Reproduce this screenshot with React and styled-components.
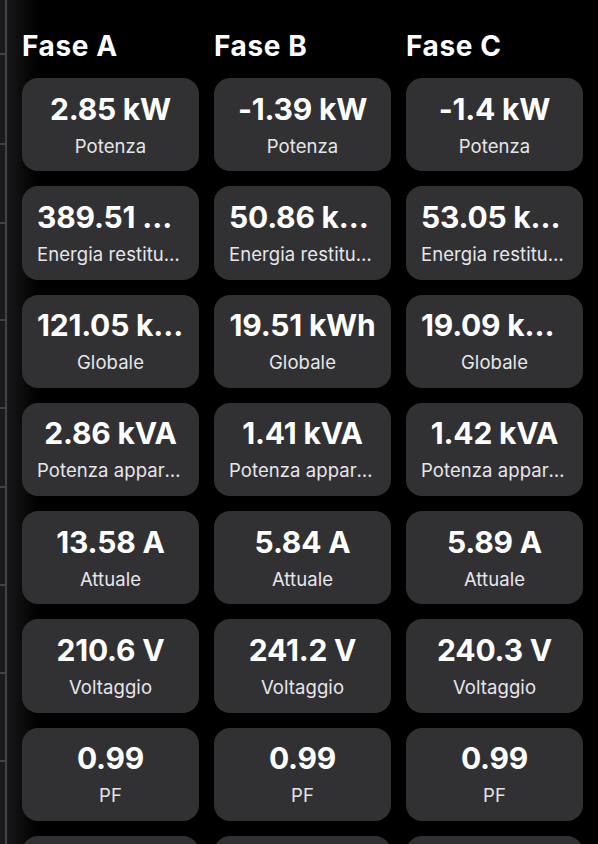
import React from "react";
import styled, { createGlobalStyle } from "styled-components";

const GlobalStyle = createGlobalStyle`
  html, body {
    margin: 0;
    padding: 0;
    background: #000000;
    font-family: Inter, "Noto Sans", sans-serif;
    -webkit-font-smoothing: antialiased;
  }
  #root {
    height: 844px;
    overflow: hidden;
  }
`;

const Page = styled.div`
  display: flex;
  height: 844px;
  width: 598px;
  overflow: hidden;
`;

const Rail = styled.div`
  display: flex;
  flex-direction: column;
  flex: 0 0 5px;
  background-color: #1a1a1c;
  border-right: 2px solid #424246;
`;

const RailRow = styled.div`
  flex: 0 0 ${(p) => p.$h}px;
  border-bottom: 2px solid #424246;
  box-sizing: border-box;
`;

const Panel = styled.div`
  flex: 1;
  background: linear-gradient(90deg, #18181a 0px, #0b0b0c 16px, #000000 32px);
  padding: 30px 15px 0 15px;
`;

const Grid = styled.div`
  display: grid;
  grid-template-columns: repeat(3, 177px);
  column-gap: 15px;
  row-gap: 15px;
`;

const PhaseTitle = styled.h2`
  margin: 0 0 1px 0;
  color: #ffffff;
  font-size: 28px;
  font-weight: 700;
  line-height: 32px;
  letter-spacing: 0.6px;
`;

const Card = styled.div`
  background-color: #313134;
  border-radius: 16px;
  padding: 12.5px 15px 13px;
  display: flex;
  flex-direction: column;
  align-items: center;
  gap: 7px;
  min-width: 0;
  min-height: 93.3px;
  box-sizing: border-box;
`;

const Value = styled.div`
  width: 100%;
  text-align: center;
  color: #ffffff;
  font-size: 30px;
  font-weight: 700;
  line-height: 36px;
  letter-spacing: -0.2px;
  white-space: nowrap;
  overflow: hidden;
  text-overflow: ellipsis;
`;

const Label = styled.div`
  width: 100%;
  text-align: center;
  color: #e6e6e9;
  font-size: 18.5px;
  font-weight: 400;
  line-height: 24px;
  letter-spacing: 0.08px;
  white-space: nowrap;
  overflow: hidden;
  text-overflow: ellipsis;
`;

const phases = [
  {
    name: "Fase A",
    values: ["2.85 kW", "389.51 kWh", "121.05 kWh", "2.86 kVA", "13.58 A", "210.6 V", "0.99", ""],
  },
  {
    name: "Fase B",
    values: ["-1.39 kW", "50.86 kWh", "19.51 kWh", "1.41 kVA", "5.84 A", "241.2 V", "0.99", ""],
  },
  {
    name: "Fase C",
    values: ["-1.4 kW", "53.05 kWh", "19.09 kWh", "1.42 kVA", "5.89 A", "240.3 V", "0.99", ""],
  },
];

const labels = [
  "Potenza",
  "Energia restituita",
  "Globale",
  "Potenza apparente",
  "Attuale",
  "Voltaggio",
  "PF",
  "Frequenza",
];

const railHeights = [55, 90, 79, 97, 88, 79, 98, 88, 88];

export default function App() {
  return (
    <>
      <GlobalStyle />
      <Page>
        <Rail>
          {railHeights.map((h, i) => (
            <RailRow key={i} $h={h} />
          ))}
        </Rail>
        <Panel>
          <Grid>
            {phases.map((p) => (
              <PhaseTitle key={p.name}>{p.name}</PhaseTitle>
            ))}
            {labels.map((label, row) =>
              phases.map((p) => (
                <Card key={p.name + row}>
                  <Value>{p.values[row] || "\u00a0"}</Value>
                  <Label>{label}</Label>
                </Card>
              ))
            )}
          </Grid>
        </Panel>
      </Page>
    </>
  );
}
